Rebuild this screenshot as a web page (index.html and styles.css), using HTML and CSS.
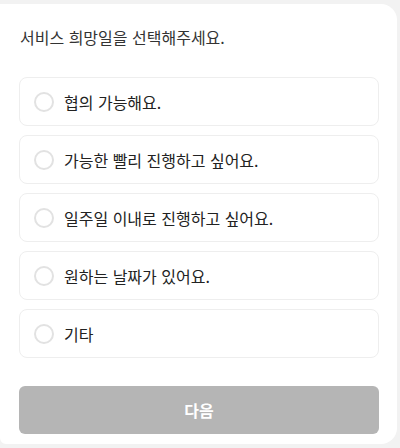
FILE: index.html
```html
<!DOCTYPE html>
<html lang="ko">
<head>
<meta charset="utf-8">
<link rel="stylesheet" href="styles.css">
</head>
<body>
<div class="card">
  <div class="title">서비스 희망일을 선택해주세요.</div>
  <div class="options">
    <label class="option"><span class="radio"></span><span class="label">협의 가능해요.</span></label>
    <label class="option"><span class="radio"></span><span class="label">가능한 빨리 진행하고 싶어요.</span></label>
    <label class="option"><span class="radio"></span><span class="label">일주일 이내로 진행하고 싶어요.</span></label>
    <label class="option"><span class="radio"></span><span class="label">원하는 날짜가 있어요.</span></label>
    <label class="option"><span class="radio"></span><span class="label">기타</span></label>
  </div>
  <button class="next" type="button">다음</button>
</div>
</body>
</html>
```

FILE: styles.css
```css
html, body {
  margin: 0;
  padding: 0;
  background: #f2f2f2;
  font-family: "Noto Sans CJK KR", "Noto Sans", sans-serif;
}
body {
  padding: 4px 3px 4px 0;
  height: 448px;
  box-sizing: border-box;
}
.card {
  background: #fff;
  border-radius: 0 16px 16px 6px;
  height: 440px;
  box-sizing: border-box;
  padding: 22px 18px 0 19px;
  display: flex;
  flex-direction: column;
}
.title {
  font-size: 16px;
  line-height: 22px;
  color: #333;
  padding-left: 1px;
}
.options {
  margin-top: 29px;
  display: flex;
  flex-direction: column;
  gap: 9px;
}
.option {
  height: 49px;
  box-sizing: border-box;
  border: 1px solid #eeeeee;
  border-radius: 8px;
  display: flex;
  align-items: center;
  padding-left: 14px;
  gap: 10px;
}
.radio {
  width: 20px;
  height: 20px;
  box-sizing: border-box;
  border: 2px solid #e2e2e2;
  border-radius: 50%;
}
.label {
  font-size: 16px;
  color: #222;
}
.next {
  margin-top: 28px;
  height: 48px;
  border: none;
  border-radius: 6px;
  background: #b5b5b5;
  color: #fff;
  font-family: inherit;
  font-size: 16px;
  font-weight: 700;
}
```
